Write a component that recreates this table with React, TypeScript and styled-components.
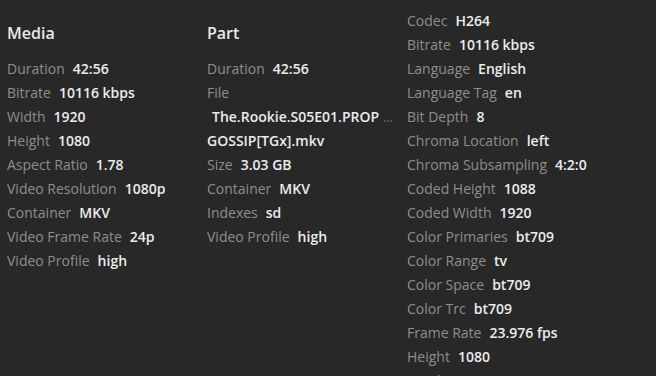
import React from "react";
import styled, { createGlobalStyle } from "styled-components";

const Global = createGlobalStyle`
  html, body {
    margin: 0;
    padding: 0;
    background: #282828;
    height: 100%;
    overflow: hidden;
  }
  body {
    font-family: "Open Sans", "Noto Sans", sans-serif;
    -webkit-font-smoothing: antialiased;
  }
`;

const Page = styled.div`
  display: grid;
  grid-template-columns: 200px 200px 200px;
  padding: 9px 0 0 7px;
  height: 376px;
  box-sizing: border-box;
  overflow: hidden;
`;

const Column = styled.section`
  display: flex;
  flex-direction: column;
`;

const Heading = styled.h2`
  margin: 12px 0 12px;
  font-size: 16px;
  line-height: 24px;
  font-weight: 600;
  color: #e8e8e8;
`;

const Row = styled.div`
  display: flex;
  align-items: baseline;
  gap: 8px;
  height: 24px;
  line-height: 24px;
  font-size: 14px;
  white-space: nowrap;
`;

const Label = styled.span`
  color: #8e8e8e;
  font-weight: 400;
`;

const Value = styled.span`
  color: #ececec;
  font-weight: 600;
`;

const FileBlock = styled.div`
  display: flex;
  flex-direction: column;
  font-size: 14px;
  line-height: 24px;
  font-weight: 600;
  color: #ececec;
`;

const FileLine = styled.div<{ $indent?: number }>`
  display: flex;
  padding-left: ${(p) => p.$indent ?? 0}px;
  white-space: nowrap;
`;

const Fade = styled.span`
  color: #6a6a6a;
  font-weight: 400;
  margin-left: 4px;
  letter-spacing: -0.5px;
`;

type Pair = [string, string];

const media: Pair[] = [
  ["Duration", "42:56"],
  ["Bitrate", "10116 kbps"],
  ["Width", "1920"],
  ["Height", "1080"],
  ["Aspect Ratio", "1.78"],
  ["Video Resolution", "1080p"],
  ["Container", "MKV"],
  ["Video Frame Rate", "24p"],
  ["Video Profile", "high"],
];

const partAfterFile: Pair[] = [
  ["Size", "3.03 GB"],
  ["Container", "MKV"],
  ["Indexes", "sd"],
  ["Video Profile", "high"],
];

const stream: Pair[] = [
  ["Codec", "H264"],
  ["Bitrate", "10116 kbps"],
  ["Language", "English"],
  ["Language Tag", "en"],
  ["Bit Depth", "8"],
  ["Chroma Location", "left"],
  ["Chroma Subsampling", "4:2:0"],
  ["Coded Height", "1088"],
  ["Coded Width", "1920"],
  ["Color Primaries", "bt709"],
  ["Color Range", "tv"],
  ["Color Space", "bt709"],
  ["Color Trc", "bt709"],
  ["Frame Rate", "23.976 fps"],
  ["Height", "1080"],
  ["Level", "40"],
];

const Rows = ({ items }: { items: Pair[] }) => (
  <>
    {items.map(([k, v]) => (
      <Row key={k}>
        <Label>{k}</Label>
        <Value>{v}</Value>
      </Row>
    ))}
  </>
);

export default function App() {
  return (
    <>
      <Global />
      <Page>
        <Column>
          <Heading>Media</Heading>
          <Rows items={media} />
        </Column>
        <Column>
          <Heading>Part</Heading>
          <Rows items={[["Duration", "42:56"]]} />
          <Row>
            <Label>File</Label>
          </Row>
          <FileBlock>
            <FileLine $indent={5}>
              The.Rookie.S05E01.PROP<Fade>...</Fade>
            </FileLine>
            <FileLine>GOSSIP[TGx].mkv</FileLine>
          </FileBlock>
          <Rows items={partAfterFile} />
        </Column>
        <Column>
          <Rows items={stream} />
        </Column>
      </Page>
    </>
  );
}
